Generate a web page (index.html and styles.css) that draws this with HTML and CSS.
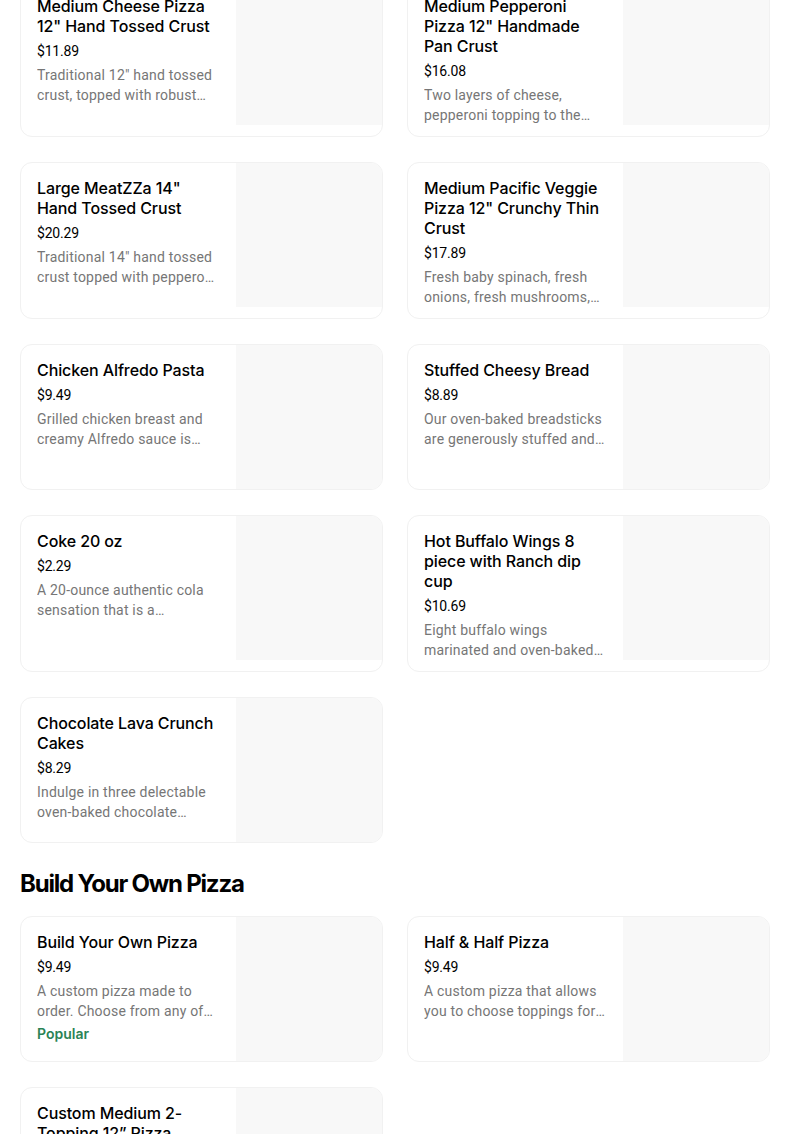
FILE: index.html
```html
<!DOCTYPE html>
<html lang="en">
<head>
<meta charset="utf-8">
<title>Menu</title>
<link rel="stylesheet" href="styles.css">
</head>
<body>
<main class="menu">
  <section class="section">
    <div class="grid">
      <div class="card">
        <div class="info">
          <h3 class="title">Medium Cheese Pizza 12" Hand Tossed Crust</h3>
          <div class="price">$11.89</div>
          <p class="desc">Traditional 12" hand tossed crust, topped with robust tomato sauce and cheese made with 100% real mozzarella.</p>
        </div>
        <div class="thumb"></div>
      </div>
      <div class="card">
        <div class="info">
          <h3 class="title">Medium Pepperoni Pizza 12" Handmade Pan Crust</h3>
          <div class="price">$16.08</div>
          <p class="desc">Two layers of cheese, pepperoni topping to the edge of a handmade pan crust.</p>
        </div>
        <div class="thumb"></div>
      </div>
      <div class="card">
        <div class="info">
          <h3 class="title">Large MeatZZa 14" Hand Tossed Crust</h3>
          <div class="price">$20.29</div>
          <p class="desc">Traditional 14" hand tossed crust topped with pepperoni, ham, Italian sausage and beef.</p>
        </div>
        <div class="thumb"></div>
      </div>
      <div class="card">
        <div class="info">
          <h3 class="title">Medium Pacific Veggie Pizza 12" Crunchy Thin Crust</h3>
          <div class="price">$17.89</div>
          <p class="desc">Fresh baby spinach, fresh onions, fresh mushrooms, roasted red peppers and black olives.</p>
        </div>
        <div class="thumb"></div>
      </div>
      <div class="card">
        <div class="info">
          <h3 class="title">Chicken Alfredo Pasta</h3>
          <div class="price">$9.49</div>
          <p class="desc">Grilled chicken breast and creamy Alfredo sauce is mixed with penne pasta and baked to creamy perfection.</p>
        </div>
        <div class="thumb"></div>
      </div>
      <div class="card">
        <div class="info">
          <h3 class="title">Stuffed Cheesy Bread</h3>
          <div class="price">$8.89</div>
          <p class="desc">Our oven-baked breadsticks are generously stuffed and covered with a blend of cheese.</p>
        </div>
        <div class="thumb"></div>
      </div>
      <div class="card">
        <div class="info">
          <h3 class="title">Coke 20 oz</h3>
          <div class="price">$2.29</div>
          <p class="desc">A 20-ounce authentic cola sensation that is a refreshing part of sharing life's enjoyable moments.</p>
        </div>
        <div class="thumb"></div>
      </div>
      <div class="card">
        <div class="info">
          <h3 class="title">Hot Buffalo Wings 8 piece with Ranch dip cup</h3>
          <div class="price">$10.69</div>
          <p class="desc">Eight buffalo wings marinated and oven-baked then served with a Ranch dipping cup.</p>
        </div>
        <div class="thumb"></div>
      </div>
      <div class="card">
        <div class="info">
          <h3 class="title">Chocolate Lava Crunch Cakes</h3>
          <div class="price">$8.29</div>
          <p class="desc">Indulge in three delectable oven-baked chocolate masterpieces with a molten chocolate center.</p>
        </div>
        <div class="thumb"></div>
      </div>
    </div>
  </section>

  <section class="section">
    <h2 class="section-title">Build Your Own Pizza</h2>
    <div class="grid">
      <div class="card">
        <div class="info">
          <h3 class="title">Build Your Own Pizza</h3>
          <div class="price">$9.49</div>
          <p class="desc">A custom pizza made to order. Choose from any of our crusts, sauces and toppings.</p>
          <div class="tag">Popular</div>
        </div>
        <div class="thumb"></div>
      </div>
      <div class="card">
        <div class="info">
          <h3 class="title">Half &amp; Half Pizza</h3>
          <div class="price">$9.49</div>
          <p class="desc">A custom pizza that allows you to choose toppings for each half of the pizza.</p>
        </div>
        <div class="thumb"></div>
      </div>
      <div class="card">
        <div class="info">
          <h3 class="title">Custom Medium 2-Topping 12” Pizza</h3>
          <div class="price">$11.99</div>
          <p class="desc">Choose any two toppings on a medium 12" pizza with your choice of crust.</p>
        </div>
        <div class="thumb"></div>
      </div>
    </div>
  </section>
</main>
</body>
</html>
```

FILE: styles.css
```css
* { box-sizing: border-box; }

html, body {
  margin: 0;
  padding: 0;
  background: #ffffff;
}

body {
  font-family: "Inter", "Roboto", "Liberation Sans", sans-serif;
  color: #000000;
  overflow: hidden;
}

.menu {
  width: 790px;
  padding: 0 20px;
  margin-top: -20px;
}

.section-title {
  margin: 0;
  padding: 25px 0 16px;
  font-size: 24px;
  line-height: 32px;
  font-weight: 700;
  letter-spacing: -1.2px;
}

.grid {
  display: grid;
  grid-template-columns: 363px 363px;
  column-gap: 24px;
  row-gap: 25px;
}

.card {
  display: flex;
  align-items: flex-start;
  border: 1px solid #f1f1f1;
  border-radius: 12px;
  overflow: hidden;
  background: #ffffff;
}

.info {
  flex: 1;
  min-width: 0;
  padding: 15px 16px 11px 16px;
}

.thumb {
  width: 146px;
  height: 144px;
  flex: none;
  background: #f8f8f8;
}

.title {
  margin: 0;
  font-size: 16px;
  line-height: 20px;
  font-weight: 500;
  letter-spacing: -0.1px;
}

.price {
  margin-top: 5px;
  font-family: "Roboto", "Liberation Sans", sans-serif;
  font-size: 14px;
  line-height: 20px;
  letter-spacing: -0.2px;
}

.desc {
  margin: 4px 0 0;
  font-family: "Roboto", "Liberation Sans", sans-serif;
  font-size: 14px;
  line-height: 20px;
  color: #767676;
  letter-spacing: 0.2px;
  display: -webkit-box;
  -webkit-line-clamp: 2;
  -webkit-box-orient: vertical;
  overflow: hidden;
}

.tag {
  margin-top: 3px;
  font-size: 14px;
  line-height: 20px;
  font-weight: 600;
  color: #2a8355;
}
```
